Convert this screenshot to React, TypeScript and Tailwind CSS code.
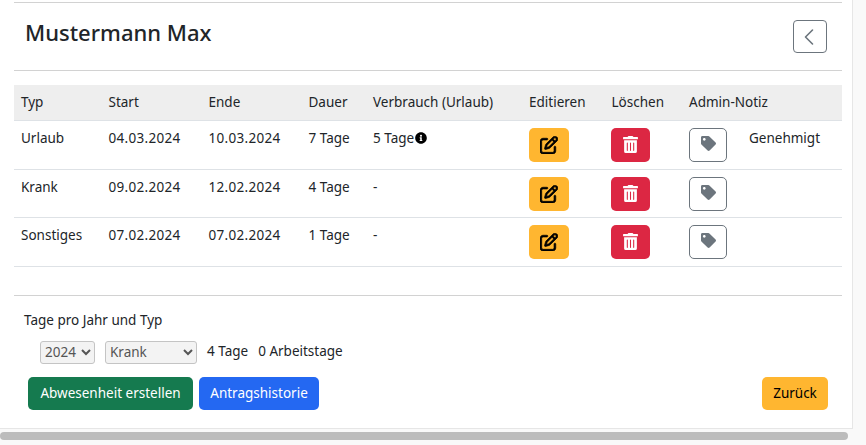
import { ChevronLeft } from "lucide-react";
import { FaTrashAlt, FaTag, FaInfoCircle } from "react-icons/fa";
import { FaRegPenToSquare } from "react-icons/fa6";

const rows = [
  { typ: "Urlaub", start: "04.03.2024", ende: "10.03.2024", dauer: "7 Tage", verbrauch: "5 Tage", info: true, note: "Genehmigt", h: "h-[49px]" },
  { typ: "Krank", start: "09.02.2024", ende: "12.02.2024", dauer: "4 Tage", verbrauch: "-", info: false, note: "", h: "h-[48px]" },
  { typ: "Sonstiges", start: "07.02.2024", ende: "07.02.2024", dauer: "1 Tage", verbrauch: "-", info: false, note: "", h: "h-[49px]" },
];

export default function App() {
  return (
    <div className="h-[445px] w-[866px] overflow-hidden bg-[#f9f9f9] font-['Noto_Sans',sans-serif] text-[13.5px] text-[#212529]">
      <div className="h-[429px] w-[853px] border-r border-b border-[#e6e6e6] bg-white px-[14px] pt-[2px]">
        <div className="w-[828px] border-t border-[#d2d2d2]">
          <div className="flex h-[67px] items-start justify-between pr-[15px] pl-[11px]">
            <h1 className="mt-[14px] text-[22px] leading-[30px] font-medium">Mustermann Max</h1>
            <button className="mt-[17px] flex h-[33px] w-[34px] items-center justify-center rounded-[4px] border border-[#6c757d] pr-[3px] text-[#6c757d]">
              <ChevronLeft size={28} strokeWidth={1.4} />
            </button>
          </div>
          <div className="border-t border-[#d2d2d2] pt-[14px]">
            <table className="w-[828px] table-fixed border-collapse">
              <thead>
                <tr className="h-[35px] border-b border-[#dee2e6] bg-[#eeeeee] text-left">
                  <th className="w-[87.5px] pl-[7px] font-normal">Typ</th>
                  <th className="w-[100px] pl-[7px] font-normal">Start</th>
                  <th className="w-[100px] pl-[7px] font-normal">Ende</th>
                  <th className="w-[64.5px] pl-[7px] font-normal">Dauer</th>
                  <th className="w-[156px] pl-[7px] font-normal">Verbrauch (Urlaub)</th>
                  <th className="w-[82.5px] pl-[7px] font-normal">Editieren</th>
                  <th className="w-[77.5px] pl-[7px] font-normal">Löschen</th>
                  <th className="w-[60px] pl-[7px] font-normal whitespace-nowrap">Admin-Notiz</th>
                  <th className="font-normal"></th>
                </tr>
              </thead>
              <tbody>
                {rows.map((r) => (
                  <tr key={r.typ} className={`${r.h} border-b border-[#dee2e6] align-top`}>
                    <td className="pt-[7px] pl-[7px]">{r.typ}</td>
                    <td className="pt-[7px] pl-[7px] tracking-[0.3px]">{r.start}</td>
                    <td className="pt-[7px] pl-[7px] tracking-[0.3px]">{r.ende}</td>
                    <td className="pt-[7px] pl-[7px]">{r.dauer}</td>
                    <td className="pt-[7px] pl-[7px]">
                      <span className="inline-flex items-center">
                        {r.verbrauch}
                        {r.info && <FaInfoCircle size={12} className="ml-[1px] text-black" />}
                      </span>
                    </td>
                    <td className="pt-[7px] pl-[7px]">
                      <button className="flex h-[34px] w-[40px] items-center justify-center rounded-[5px] bg-[#ffb630] text-black">
                        <FaRegPenToSquare size={18} stroke="black" strokeWidth={20} />
                      </button>
                    </td>
                    <td className="pt-[7px] pl-[7px]">
                      <button className="-ml-[1px] flex h-[34px] w-[39px] items-center justify-center rounded-[5px] bg-[#dc2743] text-white">
                        <FaTrashAlt size={17} />
                      </button>
                    </td>
                    <td className="pt-[7px] pl-[7px]">
                      <button className="flex h-[34px] w-[38px] items-center justify-center rounded-[5px] border border-[#6c757d] pb-[2px] text-[#6c757d]">
                        <FaTag size={15} />
                      </button>
                    </td>
                    <td className="pt-[7px] pl-[7px] whitespace-nowrap">{r.note}</td>
                  </tr>
                ))}
              </tbody>
            </table>
          </div>
          <div className="mt-[28px] border-t border-[#d2d2d2] pt-[15px]">
            <p className="pl-[10px] leading-[18px]">Tage pro Jahr und Typ</p>
            <div className="mt-[12px] flex items-center pl-[26px]">
              <select defaultValue="2024" className="h-[23px] w-[55px] rounded-[3px] border border-[#c4c4c4] bg-[#f3f3f3] text-[#555]">
                <option>2024</option>
              </select>
              <select defaultValue="Krank" className="ml-[10px] h-[23px] w-[92px] rounded-[3px] border border-[#c4c4c4] bg-[#f3f3f3] text-[#555]">
                <option>Krank</option>
              </select>
              <span className="ml-[10px] -mt-[2px]">4 Tage</span>
              <span className="ml-[10px] -mt-[2px]">0 Arbeitstage</span>
            </div>
            <div className="mt-[13px] flex items-center justify-between pr-[14px] pl-[14px]">
              <div className="flex gap-[6px]">
                <button className="h-[33px] w-[165px] rounded-[5px] bg-[#157a4f] text-white">Abwesenheit erstellen</button>
                <button className="h-[33px] w-[120px] rounded-[5px] bg-[#2468f2] text-white">Antragshistorie</button>
              </div>
              <button className="h-[33px] w-[66px] rounded-[5px] bg-[#ffb630] text-black">Zurück</button>
            </div>
          </div>
        </div>
      </div>
      <div className="mt-[3px] h-[8px] w-[848px] rounded-[4px] bg-[#bcbcbc]" />
    </div>
  );
}
